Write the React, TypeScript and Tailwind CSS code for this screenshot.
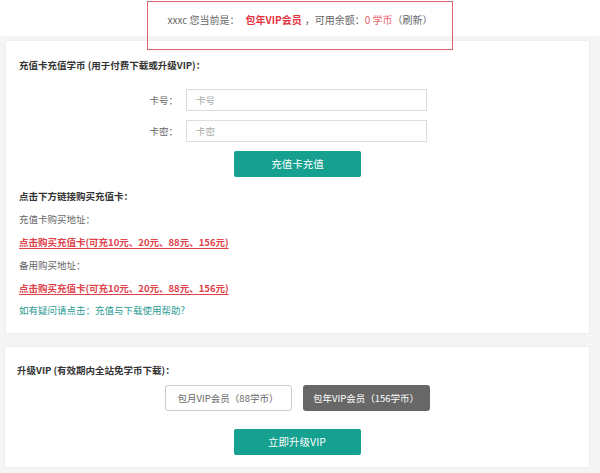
import React from 'react';

const font = { fontFamily: '"Noto Sans CJK SC", "Liberation Sans", sans-serif' };

function LinkLine({ text }: { text: string }) {
    return (
        <p className="leading-[23px]">
            <a className="font-bold text-[#e0414b] underline underline-offset-2">{text}</a>
        </p>
    );
}

export default function App() {
    return (
        <div className="relative w-[600px] h-[473px] bg-[#f5f5f5] overflow-hidden text-[9.5px] text-[#666]" style={font}>
            {/* header */}
            <div className="h-[36px] bg-white flex items-center justify-center">
                <span className="mt-[2px] text-[10px]">
                    xxxc 您当前是：
                    <b className="text-[#e3363f] ml-[6px]">包年VIP会员</b>
                    <span className="ml-[3px]">，可用余额：</span>
                    <span className="text-[#e8636a]">0 学币</span>
                    <span>（刷新）</span>
                </span>
            </div>
            <div className="absolute left-[147px] top-[1px] w-[306px] h-[49px] border-[1.5px] border-[#d6646f]"></div>

            <div className="pt-[5px] flex flex-col gap-[14px]">
                {/* recharge card */}
                <div className="ml-[6px] w-[583px] h-[292px] bg-white rounded-[2px] shadow-[0_0_4px_rgba(0,0,0,0.06)] px-[13px] pt-[13px]">
                    <h3 className="leading-[23px] font-bold text-[#333]">充值卡充值学币 (用于付费下载或升级VIP)：</h3>

                    <div className="mt-[12px] flex flex-col gap-[9px]">
                        <div className="flex items-center justify-center pr-[20px] gap-[8px]">
                            <label className="w-[30px] text-right">卡号：</label>
                            <input
                                className="w-[241px] h-[22px] border border-[#ddd] px-[9px] text-[9.5px] outline-none placeholder:text-[#aaa]"
                                placeholder="卡号"
                            />
                        </div>
                        <div className="flex items-center justify-center pr-[20px] gap-[8px]">
                            <label className="w-[30px] text-right">卡密：</label>
                            <input
                                className="w-[241px] h-[22px] border border-[#ddd] px-[9px] text-[9.5px] outline-none placeholder:text-[#aaa]"
                                placeholder="卡密"
                            />
                        </div>
                    </div>

                    <div className="mt-[9px] flex justify-center">
                        <button className="w-[127px] h-[26px] bg-[#16a08f] text-white text-[10.5px] rounded-[2px]">充值卡充值</button>
                    </div>

                    <div className="mt-[8px]">
                        <p className="leading-[23px] font-bold text-[#333]">点击下方链接购买充值卡：</p>
                        <p className="leading-[23px]">充值卡购买地址：</p>
                        <LinkLine text="点击购买充值卡(可充10元、20元、88元、156元)" />
                        <p className="leading-[23px]">备用购买地址：</p>
                        <LinkLine text="点击购买充值卡(可充10元、20元、88元、156元)" />
                        <p className="leading-[20px] text-[#2c9c93]">如有疑问请点击：充值与下载使用帮助?</p>
                    </div>
                </div>

                {/* upgrade vip */}
                <div className="ml-[5px] w-[584px] h-[120px] bg-white rounded-[2px] shadow-[0_0_4px_rgba(0,0,0,0.06)] px-[12px] pt-[12px]">
                    <h3 className="leading-[23px] font-bold text-[#333]">升级VIP (有效期内全站免学币下载)：</h3>
                    <div className="mt-[3px] flex justify-center gap-[11px]">
                        <button className="w-[127px] h-[26px] border border-[#ccc] rounded-[3px] bg-white text-[#666]">包月VIP会员（88学币）</button>
                        <button className="w-[127px] h-[26px] rounded-[3px] bg-[#676767] text-white">包年VIP会员（156学币）</button>
                    </div>
                    <div className="mt-[18px] flex justify-center">
                        <button className="w-[127px] h-[26px] bg-[#16a08f] text-white text-[10.5px] rounded-[2px]">立即升级VIP</button>
                    </div>
                </div>
            </div>
        </div>
    );
}
